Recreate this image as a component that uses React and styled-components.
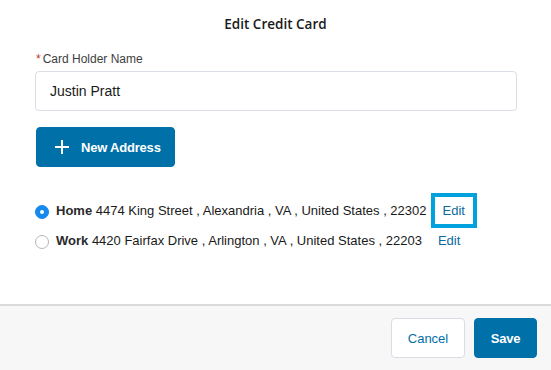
import { useState } from 'react'
import styled, { createGlobalStyle } from 'styled-components'

const addresses = [
  { id: 'home', name: 'Home', line: '4474 King Street , Alexandria , VA , United States , 22302' },
  { id: 'work', name: 'Work', line: '4420 Fairfax Drive , Arlington , VA , United States , 22203' },
]

const App = () => {
  const [selected, setSelected] = useState('home')
  const [name, setName] = useState('Justin Pratt')

  return (
    <>
      <GlobalStyle />
      <Modal>
        <Header>Edit Credit Card</Header>
        <Body>
          <Label>
            <Required>*</Required>Card Holder Name
          </Label>
          <Input value={name} onChange={(e) => setName(e.target.value)} />

          <PrimaryButton $wide>
            <svg width="14" height="14" viewBox="0 0 14 14">
              <path d="M7 0v14M0 7h14" stroke="#fff" strokeWidth="2" />
            </svg>
            New Address
          </PrimaryButton>

          <AddressList>
            {addresses.map((a) => (
              <AddressRow key={a.id} onClick={() => setSelected(a.id)}>
                <Radio $checked={selected === a.id} />
                <AddressText>
                  <b>{a.name}</b> {a.line}
                </AddressText>
                <EditLink $focused={a.id === 'home'}>Edit</EditLink>
              </AddressRow>
            ))}
          </AddressList>
        </Body>
        <Footer>
          <NeutralButton>Cancel</NeutralButton>
          <PrimaryButton>Save</PrimaryButton>
        </Footer>
      </Modal>
    </>
  )
}

const GlobalStyle = createGlobalStyle`
  body {
    margin: 0;
    background: #fff;
    font-family: "Liberation Sans", Arial, sans-serif;
    color: #16325c;
  }
`

const Modal = styled.div`
  height: 100vh;
  display: flex;
  flex-direction: column;
`

const Header = styled.h2`
  margin: 0;
  padding-top: 15px;
  height: 29px;
  text-align: center;
  font-family: "Open Sans", sans-serif;
  font-weight: 600;
  font-size: 13.5px;
  color: #1a1a1a;
`

const Body = styled.div`
  flex: 1;
  padding: 8px 34px 0 35px;
  display: flex;
  flex-direction: column;
  align-items: flex-start;
`

const Label = styled.label`
  font-size: 12px;
  line-height: 14px;
  color: #3e3e3c;
  margin-left: 1px;
  margin-bottom: 5px;
`

const Required = styled.span`
  color: #c23934;
  margin-right: 2px;
`

const Input = styled.input`
  box-sizing: border-box;
  width: 100%;
  height: 40px;
  border: 1px solid #d8dde6;
  border-radius: 4px;
  padding: 0 14px;
  font-family: inherit;
  font-size: 14px;
  color: #1a1a1a;
  outline: none;
`

const PrimaryButton = styled.button`
  box-sizing: border-box;
  height: 40px;
  display: flex;
  align-items: center;
  gap: 12px;
  white-space: nowrap;
  margin-top: ${({ $wide }) => ($wide ? '16px' : '0')};
  margin-left: ${({ $wide }) => ($wide ? '1px' : '0')};
  width: ${({ $wide }) => ($wide ? '139px' : '63px')};
  justify-content: ${({ $wide }) => ($wide ? 'flex-start' : 'center')};
  padding: ${({ $wide }) => ($wide ? '0 0 0 18px' : '0')};
  background: #0070a8;
  border: 1px solid #0070a8;
  border-radius: 4px;
  color: #fff;
  font-family: inherit;
  font-weight: 700;
  font-size: 13px;
  letter-spacing: -0.2px;
  cursor: pointer;
`

const AddressList = styled.div`
  margin-top: 28px;
  display: flex;
  flex-direction: column;
`

const AddressRow = styled.div`
  height: 30px;
  display: flex;
  align-items: center;
  font-size: 13px;
  color: #1a1a1a;
  cursor: pointer;
`

const Radio = styled.span`
  box-sizing: border-box;
  width: 14px;
  height: 14px;
  border-radius: 50%;
  margin-right: 7px;
  margin-top: 3px;
  background: ${({ $checked }) => ($checked ? '#1589ee' : '#fff')};
  border: 1px solid ${({ $checked }) => ($checked ? '#1589ee' : '#b5b5b5')};
  display: flex;
  align-items: center;
  justify-content: center;

  &::after {
    content: '';
    width: 4px;
    height: 4px;
    border-radius: 50%;
    background: #fff;
    display: ${({ $checked }) => ($checked ? 'block' : 'none')};
  }
`

const AddressText = styled.span`
  white-space: nowrap;
  b {
    color: #2b2b2b;
  }
`

const EditLink = styled.a`
  margin-left: 4px;
  padding: 6px 8px;
  line-height: 15px;
  border: 4px solid ${({ $focused }) => ($focused ? '#00a1df' : 'transparent')};
  color: #0a6aa1;
  font-size: 13px;
`

const Footer = styled.div`
  height: 64px;
  border-top: 2px solid #dadada;
  background: #f7f7f7;
  display: flex;
  align-items: center;
  justify-content: flex-end;
  gap: 9px;
  padding-right: 14px;
`

const NeutralButton = styled.button`
  box-sizing: border-box;
  width: 74px;
  height: 40px;
  background: #fff;
  border: 1px solid #d8dde6;
  border-radius: 4px;
  color: #0070a8;
  font-family: inherit;
  font-size: 13px;
  cursor: pointer;
`

export default App
